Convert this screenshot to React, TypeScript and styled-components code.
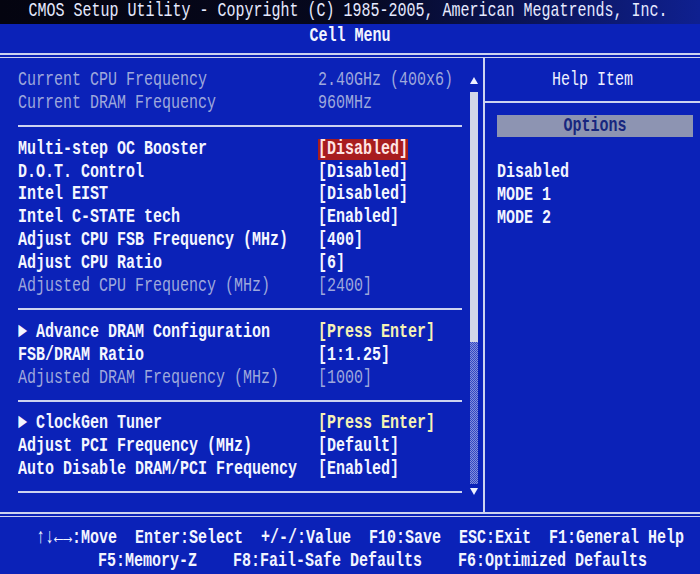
import React from "react";
import styled, { createGlobalStyle, css } from "styled-components";

// Palette / metrics taken from the screenshot
const BLUE = "#0b22b8";
const LINE = "#cdd3f0";
const ROW = 22.9;

type Tone = "normal" | "dim" | "enter" | "selected";

type Item =
  | { kind: "sep" }
  | { kind: "row"; label: string; value: string; tone?: Tone; valueTone?: Tone; sub?: boolean };

const items: Item[] = [
  { kind: "row", label: "Current CPU Frequency", value: "2.40GHz (400x6)", tone: "dim", valueTone: "dim" },
  { kind: "row", label: "Current DRAM Frequency", value: "960MHz", tone: "dim", valueTone: "dim" },
  { kind: "sep" },
  { kind: "row", label: "Multi-step OC Booster", value: "[Disabled]", valueTone: "selected" },
  { kind: "row", label: "D.O.T. Control", value: "[Disabled]" },
  { kind: "row", label: "Intel EIST", value: "[Disabled]" },
  { kind: "row", label: "Intel C-STATE tech", value: "[Enabled]" },
  { kind: "row", label: "Adjust CPU FSB Frequency (MHz)", value: "[400]" },
  { kind: "row", label: "Adjust CPU Ratio", value: "[6]" },
  { kind: "row", label: "Adjusted CPU Frequency (MHz)", value: "[2400]", tone: "dim", valueTone: "dim" },
  { kind: "sep" },
  { kind: "row", label: "Advance DRAM Configuration", value: "[Press Enter]", valueTone: "enter", sub: true },
  { kind: "row", label: "FSB/DRAM Ratio", value: "[1:1.25]" },
  { kind: "row", label: "Adjusted DRAM Frequency (MHz)", value: "[1000]", tone: "dim", valueTone: "dim" },
  { kind: "sep" },
  { kind: "row", label: "ClockGen Tuner", value: "[Press Enter]", valueTone: "enter", sub: true },
  { kind: "row", label: "Adjust PCI Frequency (MHz)", value: "[Default]" },
  { kind: "row", label: "Auto Disable DRAM/PCI Frequency", value: "[Enabled]" },
  { kind: "sep" },
];

const options = ["Disabled", "MODE 1", "MODE 2"];

const GlobalStyle = createGlobalStyle`
  html, body {
    margin: 0;
    padding: 0;
    background: ${BLUE};
  }
  body {
    font-family: "Liberation Mono", "DejaVu Sans Mono", monospace;
    font-size: 15px;
  }
`;

// the BIOS font is a tall narrow bitmap face
const tall = css`
  transform: scaleY(1.4);
`;

const Screen = styled.div`
  width: 700px;
  height: 574px;
  overflow: hidden;
  display: flex;
  flex-direction: column;
  background: ${BLUE};
  color: #f2f4ff;
`;

const TitleBar = styled.div`
  height: 24px;
  flex-shrink: 0;
  display: flex;
  align-items: center;
  justify-content: center;
  padding-right: 4px;
  background: linear-gradient(90deg, #040410 0%, #06081e 50%, #0f2090 100%);
  white-space: pre;
  color: #e6eaff;
`;

const Tall = styled.span`
  display: inline-block;
  line-height: 16px;
  ${tall}
`;

const SubTitle = styled.div`
  height: 29px;
  flex-shrink: 0;
  box-sizing: border-box;
  padding-top: 4px;
  text-align: center;
  font-weight: bold;
`;

const DoubleRule = styled.div`
  height: 2px;
  flex-shrink: 0;
  border-top: 2px solid ${LINE};
  border-bottom: 1px solid ${LINE};
`;

const Main = styled.div`
  flex: 1;
  display: grid;
  grid-template-columns: 483px 1fr;
  min-height: 0;
`;

const LeftPane = styled.div`
  display: flex;
`;

const List = styled.div`
  flex: 1;
  padding: 11px 8px 0 18px;
`;

const Separator = styled.div`
  height: ${ROW}px;
  display: flex;
  align-items: center;

  &::after {
    content: "";
    flex: 1;
    height: 2px;
    background: ${LINE};
  }
`;

const toneColor = (tone: Tone) => {
  switch (tone) {
    case "dim":
      return "#9ea8dc";
    case "enter":
      return "#f6f2b4";
    case "selected":
      return "#ffe4e4";
    default:
      return "#f4f6ff";
  }
};

const Row = styled.div`
  height: ${ROW}px;
  display: grid;
  grid-template-columns: 300px 1fr;
  align-items: center;
  white-space: pre;
  ${tall}
`;

const Label = styled.span<{ $tone: Tone }>`
  color: ${(p) => toneColor(p.$tone)};
  font-weight: ${(p) => (p.$tone === "dim" ? "normal" : "bold")};
`;

const Value = styled.span<{ $tone: Tone }>`
  justify-self: start;
  line-height: 15px;
  color: ${(p) => toneColor(p.$tone)};
  font-weight: ${(p) => (p.$tone === "dim" ? "normal" : "bold")};
  background: ${(p) => (p.$tone === "selected" ? "#a81c1e" : "transparent")};
`;

const ScrollCol = styled.div`
  width: 8px;
  margin-right: 5px;
  padding: 19px 0 17px;
  display: flex;
  flex-direction: column;
  align-items: center;
`;

const Thumb = styled.div`
  width: 8px;
  height: 250px;
  margin-top: 8px;
  background: #d3d7e8;
`;

const Track = styled.div`
  flex: 1;
  width: 8px;
  margin-bottom: 4px;
  background: repeating-conic-gradient(#8490dc 0 25%, #3348c4 0 50%) 0 0 / 2px 2px;
`;

const HelpPane = styled.div`
  border-left: 2px solid ${LINE};
  display: flex;
  flex-direction: column;
`;

const HelpHeader = styled.div`
  height: 45px;
  display: flex;
  align-items: center;
  justify-content: center;
  padding-top: 2px;
  box-sizing: border-box;
  border-bottom: 2px solid ${LINE};
  color: #eef0ff;
`;

const OptionsBar = styled.div`
  margin: 12px 7px 0 12px;
  height: 22px;
  display: flex;
  align-items: center;
  justify-content: center;
  padding-top: 2px;
  box-sizing: border-box;
  background: #8d94b2;
  color: #17267e;
  font-weight: bold;
`;

const OptionList = styled.div`
  padding: 25px 0 0 12px;
`;

const OptionRow = styled.div`
  height: ${ROW}px;
  line-height: ${ROW}px;
  font-weight: bold;
  white-space: pre;
  ${tall}
`;

const Footer = styled.div`
  height: 57px;
  flex-shrink: 0;
  box-sizing: border-box;
  padding-top: 9.5px;
`;

const FooterLine = styled.div<{ $indent: number }>`
  height: 23px;
  line-height: 23px;
  padding-left: ${(p) => p.$indent}px;
  white-space: pre;
  font-weight: bold;
  ${tall}
`;

const Arrow = ({ down }: { down?: boolean }) => (
  <svg width="8" height="7" viewBox="0 0 8 7">
    <polygon points={down ? "0,0 8,0 4,7" : "4,0 8,7 0,7"} fill="#eef0ff" />
  </svg>
);

const App = () => {
  return (
    <Screen>
      <GlobalStyle />
      <TitleBar>
        <Tall>CMOS Setup Utility - Copyright (C) 1985-2005, American Megatrends, Inc.</Tall>
      </TitleBar>
      <SubTitle>
        <Tall>Cell Menu</Tall>
      </SubTitle>
      <DoubleRule />

      <Main>
        <LeftPane>
          <List>
            {items.map((item, i) =>
              item.kind === "sep" ? (
                <Separator key={i} />
              ) : (
                <Row key={i}>
                  <Label $tone={item.tone ?? "normal"}>
                    {item.sub ? "► " : ""}
                    {item.label}
                  </Label>
                  <Value $tone={item.valueTone ?? "normal"}>{item.value}</Value>
                </Row>
              )
            )}
          </List>
          <ScrollCol>
            <Arrow />
            <Thumb />
            <Track />
            <Arrow down />
          </ScrollCol>
        </LeftPane>

        <HelpPane>
          <HelpHeader>
            <Tall>Help Item</Tall>
          </HelpHeader>
          <OptionsBar>
            <Tall>Options</Tall>
          </OptionsBar>
          <OptionList>
            {options.map((o) => (
              <OptionRow key={o}>{o}</OptionRow>
            ))}
          </OptionList>
        </HelpPane>
      </Main>

      <DoubleRule />
      <Footer>
        <FooterLine $indent={36}>{"↑↓←→:Move  Enter:Select  +/-/:Value  F10:Save  ESC:Exit  F1:General Help"}</FooterLine>
        <FooterLine $indent={98}>{"F5:Memory-Z    F8:Fail-Safe Defaults    F6:Optimized Defaults"}</FooterLine>
      </Footer>
    </Screen>
  );
};

export default App;
